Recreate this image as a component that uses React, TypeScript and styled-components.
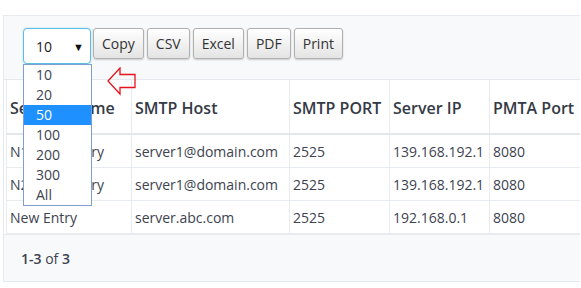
import React from 'react';
import styled, { createGlobalStyle } from 'styled-components';

const GlobalStyle = createGlobalStyle`
  body {
    margin: 0;
    background: #fff;
    font-family: "Open Sans", "Liberation Sans", sans-serif;
    color: #3d4350;
  }
`;

const Page = styled.div`
  padding: 15px 0 0 3px;
  width: 581px;
  height: 288px;
  box-sizing: border-box;
  overflow: hidden;
`;

const Panel = styled.div`
  width: 576px;
  background: #f8f9fa;
  border: 1px solid #e6e9ed;
  border-right: none;
  overflow: hidden;
`;

const Toolbar = styled.div`
  position: relative;
  height: 64px;
  box-sizing: border-box;
  padding: 12px 0 0 19px;
  display: flex;
  align-items: flex-start;
  gap: 3px;
  border-bottom: 1px solid #e6e9ed;
  z-index: 2;
`;

const SelectWrap = styled.div`
  position: relative;
  margin-right: -1px;
`;

const SelectBox = styled.div`
  width: 68px;
  height: 36px;
  box-sizing: border-box;
  border: 1px solid #5bbde4;
  border-radius: 4px;
  background: #fff;
  display: flex;
  align-items: center;
  justify-content: space-between;
  padding: 0 6px 0 12px;
  font-size: 14px;
  color: #222;
  box-shadow: 0 0 2px rgba(91, 189, 228, 0.5);
`;

const Caret = styled.span`
  font-size: 11px;
  color: #111;
`;

const ListBox = styled.ul`
  position: absolute;
  top: 36px;
  left: 0;
  width: 69px;
  margin: 0;
  padding: 0;
  list-style: none;
  background: #fff;
  border: 1px solid #7f9fd0;
  box-sizing: border-box;
`;

const Option = styled.li<{ $active?: boolean }>`
  height: 20px;
  line-height: 20px;
  padding-left: 12px;
  font-size: 14px;
  color: ${(p) => (p.$active ? '#fff' : '#3d4350')};
  background: ${(p) => (p.$active ? '#1e90ff' : 'transparent')};
`;

const Button = styled.button`
  height: 31px;
  padding: 0 8px;
  font-family: "Open Sans", "Liberation Sans", sans-serif;
  font-size: 14px;
  color: #333;
  background: linear-gradient(#ffffff, #e4e4e4);
  border: 1px solid #b0b0b0;
  border-radius: 3px;
  box-shadow: 0 1px 2px rgba(0, 0, 0, 0.2);
`;

const Arrow = styled.svg`
  position: absolute;
  left: 103px;
  top: 51px;
`;

const TableArea = styled.div`
  background: #fff;
  padding-left: 2px;
`;

const Table = styled.table`
  border-collapse: collapse;
  table-layout: fixed;
  width: 613px;
`;

const Th = styled.th`
  height: 50px;
  padding: 3px 3px 0;
  text-align: left;
  font-size: 16px;
  font-weight: 600;
  color: #343a46;
  white-space: nowrap;
  overflow: hidden;
  border: 1px solid #e8ebef;
  border-top: none;
  border-bottom: 2px solid #e3e6ea;
`;

const Td = styled.td`
  height: 31px;
  padding: 1px 3px 0 3px;
  font-size: 14px;
  white-space: nowrap;
  overflow: hidden;
  border: 1px solid #e8ebef;
`;

const Footer = styled.div`
  height: 46px;
  display: flex;
  align-items: center;
  padding-left: 17px;
  font-size: 14px;
  color: #3d4350;
  border-top: 1px solid #e6e9ed;
`;

const Num = styled.span`
  font-weight: 600;
`;

const rows = [
  ['N1 Smtp Entry', 'server1@domain.com', '2525', '139.168.192.1', '8080'],
  ['N2 Smtp Entry', 'server1@domain.com', '2525', '139.168.192.1', '8080'],
  ['New Entry', 'server.abc.com', '2525', '192.168.0.1', '8080'],
];

const options = ['10', '20', '50', '100', '200', '300', 'All'];

const App = () => {
  return (
    <Page>
      <GlobalStyle />
      <Panel>
        <Toolbar>
          <SelectWrap>
            <SelectBox>
              10
              <Caret>▼</Caret>
            </SelectBox>
            <ListBox>
              {options.map((o) => (
                <Option key={o} $active={o === '50'}>
                  {o}
                </Option>
              ))}
            </ListBox>
          </SelectWrap>
          <Button>Copy</Button>
          <Button>CSV</Button>
          <Button>Excel</Button>
          <Button>PDF</Button>
          <Button>Print</Button>
          <Arrow width="30" height="29" viewBox="0 0 30 29">
            <polygon
              points="1,14 13,1 13,7.5 28,7.5 28,20.5 13,20.5 13,27"
              fill="none"
              stroke="#e8141b"
              strokeWidth="1.3"
            />
          </Arrow>
        </Toolbar>
        <TableArea>
          <Table>
            <colgroup>
              <col style={{ width: 125 }} />
              <col style={{ width: 158 }} />
              <col style={{ width: 100 }} />
              <col style={{ width: 100 }} />
              <col style={{ width: 130 }} />
            </colgroup>
            <thead>
              <tr>
                <Th>Sender Name</Th>
                <Th>SMTP Host</Th>
                <Th>SMTP PORT</Th>
                <Th>Server IP</Th>
                <Th>PMTA Port</Th>
              </tr>
            </thead>
            <tbody>
              {rows.map((r, i) => (
                <tr key={i}>
                  {r.map((c, j) => (
                    <Td key={j}>{c}</Td>
                  ))}
                </tr>
              ))}
            </tbody>
          </Table>
        </TableArea>
        <Footer>
          <Num>1-3</Num>&nbsp;of&nbsp;<Num>3</Num>
        </Footer>
      </Panel>
    </Page>
  );
};

export default App;
